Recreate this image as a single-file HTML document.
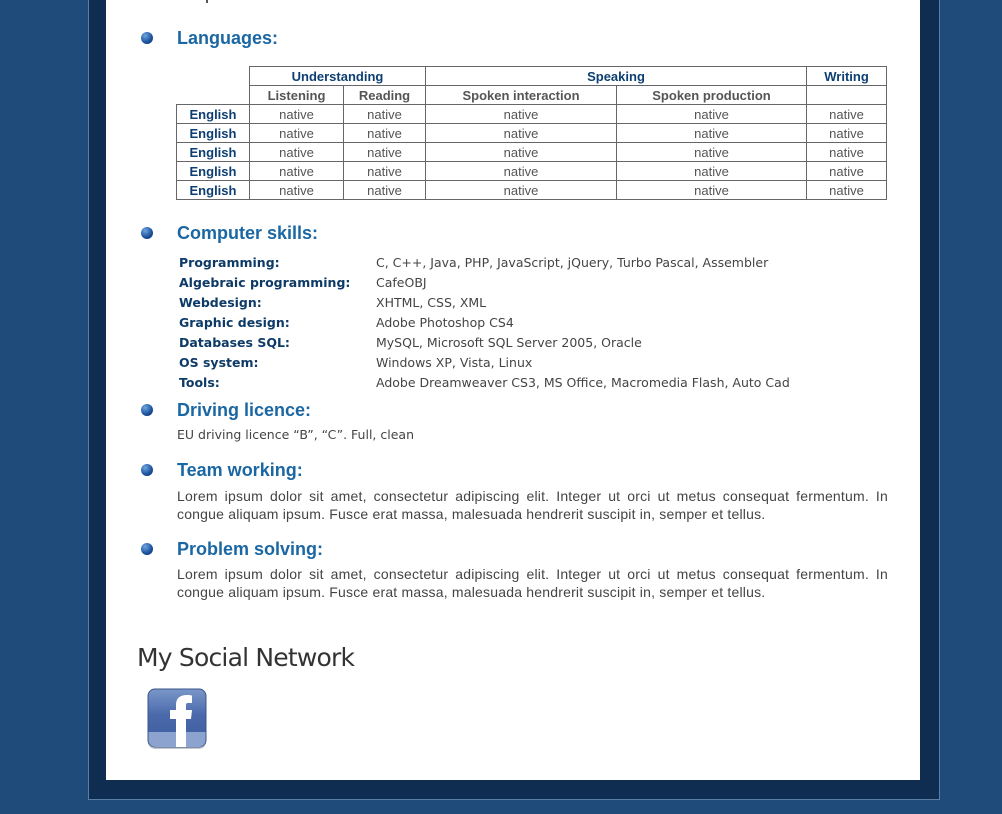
<!DOCTYPE html>
<html><head><meta charset="utf-8">
<style>
*{margin:0;padding:0;box-sizing:border-box}
html,body{width:1002px;height:814px;overflow:hidden}
body{background:#1f4b7a;position:relative;font-family:"Liberation Sans",Tahoma,sans-serif}
.frame{position:absolute;left:88px;top:-2px;width:852px;height:802px;background:#0f2d50;border:1px solid #5b7ea4;border-top:none}
.panel{position:absolute;left:106px;top:0;width:814px;height:780px;background:#fff}
.h{position:absolute;left:177px;font:bold 18px "Liberation Sans",Tahoma,sans-serif;color:#1a67a3;line-height:20px}
.b{position:absolute;left:141px;width:12px;height:12px;border-radius:50%;background:radial-gradient(circle at 35% 30%,#6fa6e0,#1a4f9a 60%,#0c2f66)}
table{position:absolute;left:176px;top:66px;border-collapse:collapse;font-size:13px}
td,th{border:1px solid #666;height:19px;padding:0;text-align:center;color:#555;font-weight:normal;line-height:17px}
th{color:#0d3f73;font-weight:bold}
th.g{color:#555}
td.l{color:#0d3f73;font-weight:bold}
.sk{position:absolute;left:179px;top:253px;font:12.5px "DejaVu Sans",Verdana,sans-serif;line-height:20px}
.sk div{display:flex}
.sk b{width:197px;color:#0d3a66}
.sk span{color:#444}
.p{position:absolute;left:177px;width:711px;font-size:14px;letter-spacing:0.2px;color:#444;line-height:18px;text-align:justify;text-align-last:left}
.sn{position:absolute;left:137px;top:643px;font:25px "DejaVu Sans",Verdana,sans-serif;color:#333;letter-spacing:-0.8px}
</style></head><body>
<div class="frame"></div>
<div class="panel"></div>
<div style="position:absolute;left:206px;top:0;width:2px;height:3px;background:#555"></div>

<div class="b" style="top:32px"></div>
<div class="h" style="top:28px">Languages:</div>

<table>
<colgroup><col style="width:73px"><col style="width:94px"><col style="width:82px"><col style="width:191px"><col style="width:190px"><col style="width:80px"></colgroup>
<tr><td style="border:none"></td><th colspan="2">Understanding</th><th colspan="2">Speaking</th><th>Writing</th></tr>
<tr><td style="border:none;border-bottom:1px solid #666"></td><th class="g">Listening</th><th class="g">Reading</th><th class="g">Spoken interaction</th><th class="g">Spoken production</th><th class="g"></th></tr>
<tr><td class="l">English</td><td>native</td><td>native</td><td>native</td><td>native</td><td>native</td></tr>
<tr><td class="l">English</td><td>native</td><td>native</td><td>native</td><td>native</td><td>native</td></tr>
<tr><td class="l">English</td><td>native</td><td>native</td><td>native</td><td>native</td><td>native</td></tr>
<tr><td class="l">English</td><td>native</td><td>native</td><td>native</td><td>native</td><td>native</td></tr>
<tr><td class="l">English</td><td>native</td><td>native</td><td>native</td><td>native</td><td>native</td></tr>
</table>

<div class="b" style="top:227px"></div>
<div class="h" style="top:223px">Computer skills:</div>
<div class="sk">
<div><b>Programming:</b><span>C, C++, Java, PHP, JavaScript, jQuery, Turbo Pascal, Assembler</span></div>
<div><b>Algebraic programming:</b><span>CafeOBJ</span></div>
<div><b>Webdesign:</b><span>XHTML, CSS, XML</span></div>
<div><b>Graphic design:</b><span>Adobe Photoshop CS4</span></div>
<div><b>Databases SQL:</b><span>MySQL, Microsoft SQL Server 2005, Oracle</span></div>
<div><b>OS system:</b><span>Windows XP, Vista, Linux</span></div>
<div><b>Tools:</b><span>Adobe Dreamweaver CS3, MS Office, Macromedia Flash, Auto Cad</span></div>
</div>

<div class="b" style="top:404px"></div>
<div class="h" style="top:400px">Driving licence:</div>
<div class="p" style="top:426px;font:12.5px 'DejaVu Sans',Verdana,sans-serif;letter-spacing:0;line-height:18px">EU driving licence “B”, “C”. Full, clean</div>

<div class="b" style="top:464px"></div>
<div class="h" style="top:460px">Team working:</div>
<div class="p" style="top:487px">Lorem ipsum dolor sit amet, consectetur adipiscing elit. Integer ut orci ut metus consequat fermentum. In congue aliquam ipsum. Fusce erat massa, malesuada hendrerit suscipit in, semper et tellus.</div>

<div class="b" style="top:543px"></div>
<div class="h" style="top:539px">Problem solving:</div>
<div class="p" style="top:565px">Lorem ipsum dolor sit amet, consectetur adipiscing elit. Integer ut orci ut metus consequat fermentum. In congue aliquam ipsum. Fusce erat massa, malesuada hendrerit suscipit in, semper et tellus.</div>

<div class="sn">My Social Network</div>

<svg style="position:absolute;left:146px;top:688px" width="62" height="62" viewBox="0 0 62 62">
<defs><linearGradient id="fg" x1="0" y1="0" x2="0" y2="1"><stop offset="0" stop-color="#7a97c9"/><stop offset="0.45" stop-color="#4a69ab"/><stop offset="1" stop-color="#3d5c9e"/></linearGradient></defs>
<rect x="2" y="3" width="58" height="58" rx="7" fill="#8a8f99" opacity="0.5"/>
<rect x="2" y="1" width="58" height="58" rx="7" fill="url(#fg)" stroke="#3a5487" stroke-width="1"/>
<path d="M2.5 44 H59.5 V52 a7 7 0 0 1 -7 7 H9.5 a7 7 0 0 1 -7 -7Z" fill="#8da3cf"/>
<path d="M30 59 V31 H24 V22 H30 V17 C30 10 34 7 41 7 C43 7 45 7.3 46 7.6 V15 H42 C40 15 40 16 40 18 V22 H46 L45 31 H40 V59Z" fill="#fff"/>
</svg>
</body></html>
